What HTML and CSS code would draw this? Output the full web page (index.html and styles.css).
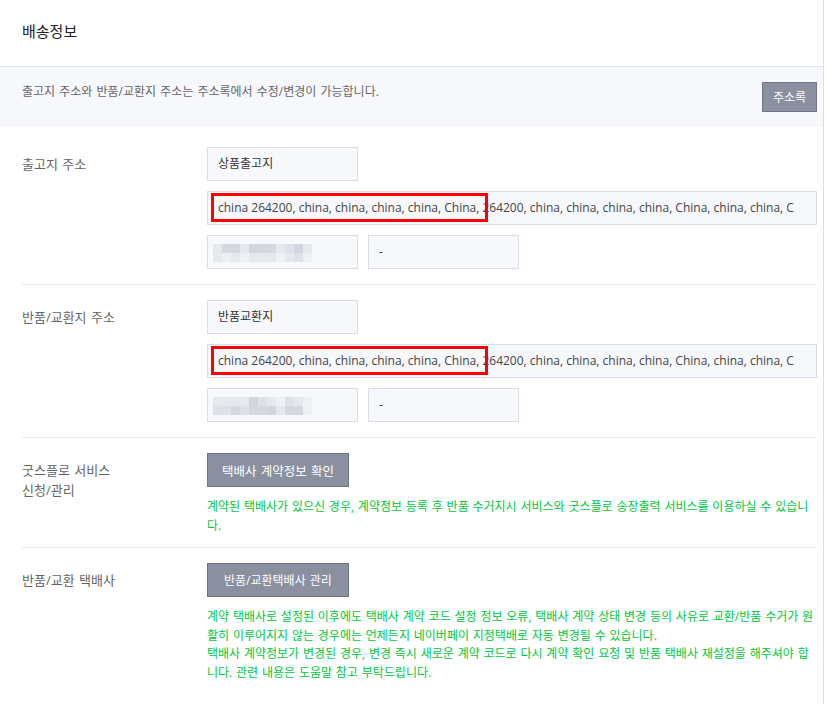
FILE: index.html
```html
<!DOCTYPE html>
<html lang="ko">
<head>
    <meta charset="UTF-8">
    <meta name="viewport" content="width=device-width, initial-scale=1.0">
    <title>배송정보</title>
    <link rel="stylesheet" href="styles.css">
</head>
<body>

<div class="panel">
    <div class="panel-head">
        <h2>배송정보</h2>
    </div>

    <div class="notice">
        <p>출고지 주소와 반품/교환지 주소는 주소록에서 수정/변경이 가능합니다.</p>
        <button class="btn btn-sm">주소록</button>
    </div>

    <div class="rows">
        <div class="row first">
            <div class="label">출고지 주소</div>
            <div class="field">
                <div class="box short">상품출고지</div>
                <div class="box long">
                    <span class="addr">china 264200, china, china, china, china, China, 264200, china, china, china, china, China, china, china, C</span>
                    <span class="mark"></span>
                </div>
                <div class="pair">
                    <div class="box short">
                        <div class="mosaic">
                            <i class="s1"></i><i class="s3"></i><i class="s3"></i><i class="s1"></i><i class="s4"></i><i class="s3"></i><i class="s3"></i><i class="s1"></i><i class="s2"></i><i class="s4"></i><i class="s1"></i>
                            <i class="s1"></i><i class="s0"></i><i class="s1"></i><i class="s0"></i><i class="s1"></i><i class="s1"></i><i class="s1"></i><i class="s0"></i><i class="s1"></i><i class="s2"></i><i class="s0"></i>
                        </div>
                    </div>
                    <div class="box short">-</div>
                </div>
            </div>
        </div>

        <div class="row">
            <div class="label">반품/교환지 주소</div>
            <div class="field">
                <div class="box short">반품교환지</div>
                <div class="box long">
                    <span class="addr">china 264200, china, china, china, china, China, 264200, china, china, china, china, China, china, china, C</span>
                    <span class="mark"></span>
                </div>
                <div class="pair">
                    <div class="box short">
                        <div class="mosaic">
                            <i class="s1"></i><i class="s1"></i><i class="s1"></i><i class="s1"></i><i class="s4"></i><i class="s2"></i><i class="s1"></i><i class="s0"></i><i class="s2"></i><i class="s1"></i><i class="s0"></i>
                            <i class="s2"></i><i class="s2"></i><i class="s3"></i><i class="s2"></i><i class="s3"></i><i class="s3"></i><i class="s4"></i><i class="s1"></i><i class="s3"></i><i class="s3"></i><i class="s0"></i>
                        </div>
                    </div>
                    <div class="box short">-</div>
                </div>
            </div>
        </div>

        <div class="row">
            <div class="label">굿스플로 서비스<br>신청/관리</div>
            <div class="field">
                <button class="btn btn-lg">택배사 계약정보 확인</button>
                <p class="help">계약된 택배사가 있으신 경우, 계약정보 등록 후 반품 수거지시 서비스와 굿스플로 송장출력 서비스를 이용하실 수 있습니다.</p>
            </div>
        </div>

        <div class="row last">
            <div class="label">반품/교환 택배사</div>
            <div class="field">
                <button class="btn">반품/교환택배사 관리</button>
                <p class="help">계약 택배사로 설정된 이후에도 택배사 계약 코드 설정 정보 오류, 택배사 계약 상태 변경 등의 사유로 교환/반품 수거가 원활히 이루어지지 않는 경우에는 언제든지 네이버페이 지정택배로 자동 변경될 수 있습니다.<br>택배사 계약정보가 변경된 경우, 변경 즉시 새로운 계약 코드로 다시 계약 확인 요청 및 반품 택배사 재설정을 해주셔야 합니다. 관련 내용은 도움말 참고 부탁드립니다.</p>
            </div>
        </div>
    </div>
</div>

</body>
</html>
```

FILE: styles.css
```css
body { margin: 0; background: #fff; font-family: "Open Sans", "Noto Sans CJK KR", sans-serif; word-spacing: 1px; color: #333; }

.panel { width: 824px; border-right: 1px solid #dcdde2; min-height: 704px; box-sizing: border-box; }
.panel-head { height: 46px; border-bottom: 1px solid #dfe4ee; padding: 20px 22px 0; }
h2 { margin: 0; font-size: 15px; font-weight: normal; line-height: 22px; color: #222; }

.notice { background: #f7f8fc; display: flex; justify-content: space-between; align-items: flex-start; padding: 15px 6px 15px 22px; }
.notice p { margin: 0; font-size: 12px; line-height: 20px; color: #666; }

.btn { font-family: inherit; word-spacing: inherit; background: #8a90a0; border: 1px solid #707686; color: #fff; font-size: 12px; height: 34px; padding: 0 16px; cursor: pointer; }
.btn-lg { font-size: 12.5px; padding: 0 14px; }
.btn-sm { height: 30px; padding: 0 10px; }

.rows { padding: 0 6px 0 22px; }
.row { display: flex; padding: 15px 0; border-bottom: 1px solid #e8e9ee; }
.row.first { padding-top: 20px; }
.row.last { border-bottom: none; padding-bottom: 20px; }
.label { width: 185px; flex: none; font-size: 13px; line-height: 20px; padding-top: 7px; color: #666; }
.field { flex: 1; display: flex; flex-direction: column; align-items: flex-start; gap: 10px; min-width: 0; }

.box { height: 34px; box-sizing: border-box; background: #f7f8fc; border: 1px solid #dadde5; font-size: 12px; line-height: 32px; padding: 0 10px; color: #333; }
.box.short { width: 151px; }
.box.long { width: 100%; position: relative; white-space: nowrap; }
.pair { display: flex; gap: 10px; }

.addr { word-spacing: 0; color: #444; }
.mark { position: absolute; left: 3px; top: 1px; width: 277px; height: 29px; border: 3px solid #ff0000; box-sizing: border-box; }

.mosaic { display: grid; grid-template-columns: repeat(11, 9px); grid-auto-rows: 9px; margin: 8px 0 0 -5px; }
.mosaic i { display: block; }
.s0 { background: #eef0f5; }
.s1 { background: #e6e8ee; }
.s2 { background: #dfe1e8; }
.s3 { background: #d6d8df; }
.s4 { background: #d2d6e0; }

.help { margin: 1px 0 -3px; font-size: 12px; line-height: 18.5px; color: #00c73c; word-break: break-all; word-spacing: 0.7px; }
```
